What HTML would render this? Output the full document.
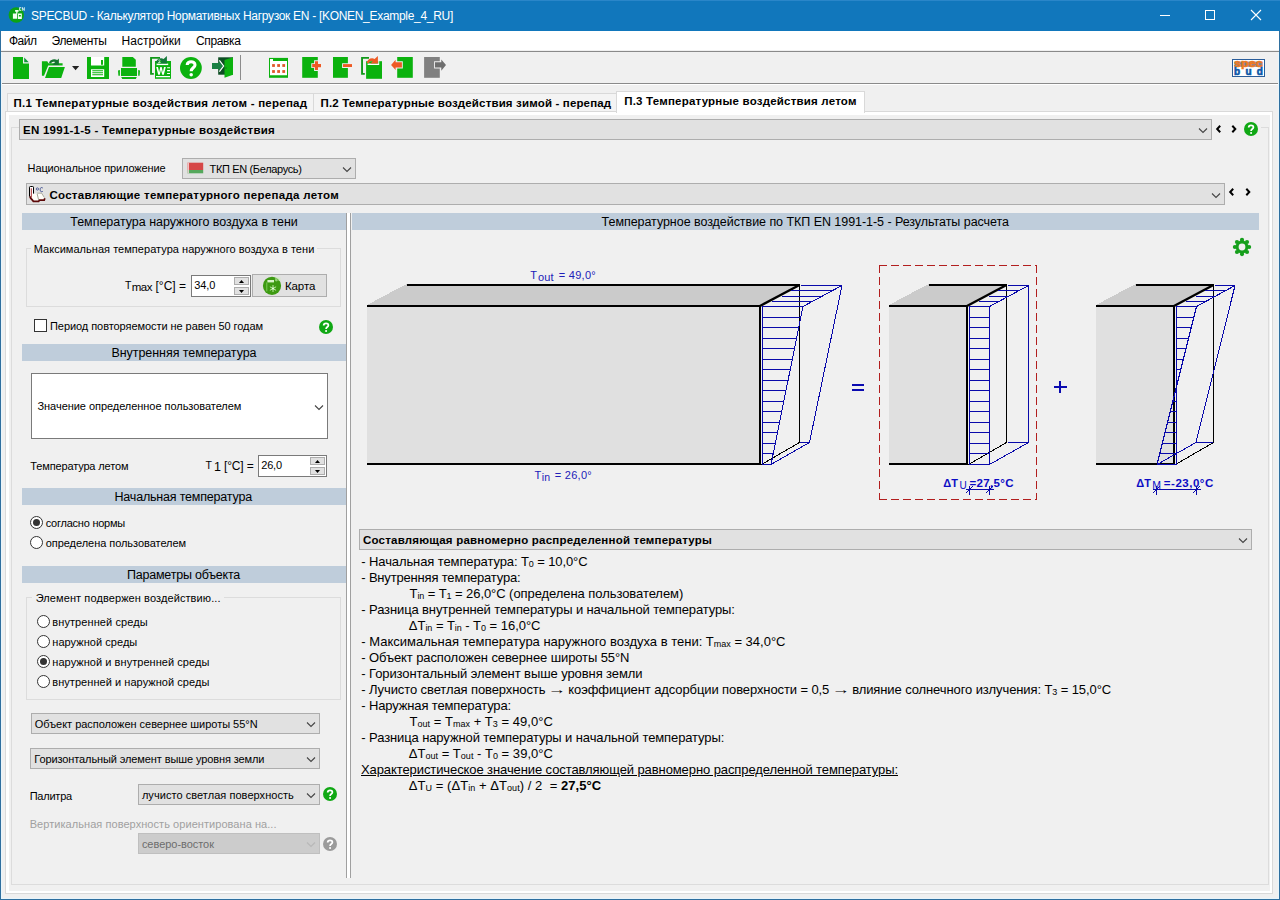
<!DOCTYPE html>
<html lang="ru"><head><meta charset="utf-8"><title>SPECBUD - Калькулятор Нормативных Нагрузок EN</title>
<style>
html,body{margin:0;padding:0;}
body{width:1280px;height:900px;overflow:hidden;background:#f0f0f0;font-family:"Liberation Sans",sans-serif;font-size:11px;color:#000;position:relative;}
.a{position:absolute;box-sizing:border-box;}
.t{position:absolute;white-space:nowrap;line-height:normal;}
.cb{position:absolute;box-sizing:border-box;background:#e1e1e1;border:1px solid #adadad;}
.wb{position:absolute;box-sizing:border-box;background:#fff;border:1px solid #7a7a7a;}
.band{position:absolute;background:#bfcddb;height:17px;}
.fs{position:absolute;box-sizing:border-box;border:1px solid #dcdcdc;}
.lg{position:absolute;background:#f0f0f0;height:3px;}
.sb{position:absolute;box-sizing:border-box;width:15px;height:8px;background:#e1e1e1;border:1px solid #adadad;}
.rd{position:absolute;box-sizing:border-box;width:13px;height:13px;border-radius:50%;background:#fff;border:1px solid #333;}
.rd.on:after{content:"";position:absolute;left:2px;top:2px;width:7px;height:7px;border-radius:50%;background:#333;}
svg{position:absolute;overflow:visible;}
sub.s{vertical-align:baseline;position:relative;}
</style></head><body>
<div class="a" style="left:0;top:0;width:1280px;height:31px;background:#1177bc"></div>
<div class="a" style="left:0;top:0;width:1280px;height:1px;background:#2a86c9"></div>
<svg style="left:8px;top:6px" width="18" height="18" viewBox="8 6 18 18">
<circle cx="16.3" cy="15" r="7.7" fill="#0ca414"/>
<path d="M12.9 13.4 H17.2 V18.8 H12.9 Z M15.1 10.1 H18.6 V11.8 H17.5 V13.4 H16.2 V11.8 H15.1 Z" fill="#f4fff4"/>
<path d="M18 13.6 H21.8 V19 H18 Z M18.9 15 V16.5 H20.8 V15 Z" fill="#f4fff4" fill-rule="evenodd"/>
<path d="M19.2 7.3 H21.2 V8 H20 V8.7 H21 V9.3 H20 V10 H21.2 V10.7 H19.2 Z M21.9 10.7 V7.3 H22.7 L23.9 9.4 V7.3 H24.7 V10.7 H23.9 L22.7 8.6 V10.7 Z" fill="#e6fbf0"/>
</svg>

<div class="t" style="left:31px;top:9px;font-size:12px;color:#fff;letter-spacing:-0.300px;">SPECBUD - Калькулятор Нормативных Нагрузок EN - [KONEN_Example_4_RU]</div>
<svg style="left:1160px;top:10px" width="102" height="11" viewBox="0 0 102 11"><path d="M0 5.5 H10" stroke="#fff" stroke-width="1"/><rect x="45.5" y="0.5" width="9" height="9" fill="none" stroke="#fff" stroke-width="1"/><path d="M91 0 L101 10 M101 0 L91 10" stroke="#fff" stroke-width="1.1"/></svg>
<div class="a" style="left:0;top:31px;width:1280px;height:19px;background:#fff"></div>
<div class="t" style="left:9px;top:34px;font-size:12px;letter-spacing:-0.504px;">Файл</div>
<div class="t" style="left:51.5px;top:34px;font-size:12px;letter-spacing:-0.322px;">Элементы</div>
<div class="t" style="left:121.5px;top:34px;font-size:12px;letter-spacing:0.040px;">Настройки</div>
<div class="t" style="left:196px;top:34px;font-size:12px;letter-spacing:-0.354px;">Справка</div>
<div class="a" style="left:0;top:51px;width:1280px;height:1px;background:#8a8a8a"></div>
<div class="a" style="left:0;top:83px;width:1280px;height:1px;background:#8a8a8a"></div>
<div class="a" style="left:0;top:84px;width:1280px;height:1px;background:#fff"></div>
<div class="a" style="left:240px;top:55px;width:1px;height:25px;background:#8c8c8c"></div>
<svg style="left:0;top:52px" width="460" height="31" viewBox="0 52 460 31">
<g fill="#0bb20e">
<!-- new -->
<path d="M13 57 H23 V63.5 H29 V79 H13 Z"/>
<path d="M24.2 57.4 L28.8 62.3 H24.2 Z" fill="#0f9a38"/>
<!-- open -->
<path d="M41.9 61.2 H47.3 L48.4 63.3 H62.6 V65.6 H48.2 L44 75.7 H41.9 Z"/>
<path d="M49 67.1 H64.9 L61.2 78 H45 Z"/>
<path d="M52 64.9 L58.9 58.6 V64.9 Z" fill="#14742f"/>
<path d="M49.9 63 C51.2 60.5 54.4 59.9 57 61.3" fill="none" stroke="#14742f" stroke-width="2.4"/>
<path d="M72 66 H79.2 L75.6 70.2 Z" fill="#222"/>
<!-- save -->
<path d="M87 57 H109 V79 H87 Z"/>
<path d="M91 57 H104.2 V65.4 H91 Z M91 69.2 H104.2 V77 H91 Z" fill="#fff"/>
<path d="M101 60 H103 V64.8 H101 Z M92.3 70.2 H103 V71.2 H92.3 Z M92.3 72.2 H103 V73.2 H92.3 Z M92.3 74.3 H103 V75.3 H92.3 Z"/>
<!-- print -->
<path d="M122.3 57 H132.8 L135.8 59.8 V66.8 H122.3 Z"/>
<path d="M121 68.1 H137 V76 H121 Z M118 70.6 L119.9 70 V75.8 H118.4 Z M140 70.6 L138.2 70 V75.8 H139.6 Z M121.2 77 H136.8 L135.8 79 H122.2 Z"/>
<!-- word -->
<path d="M150.1 57 H160 V58.7 H152 V73 H153.8 V74.7 H150.1 Z" fill="#12981a"/>
<path d="M155 61 H171 V78.8 H155 Z"/>
<path d="M156.2 67.1 H158 L159.1 72.2 L160.3 67.1 H161.7 L162.9 72.2 L164 67.1 H165.8 L163.8 74.7 H162.2 L161 69.8 L159.8 74.7 H158.2 Z M167.1 67.2 H170 V68.3 H167.1 Z M167.1 70 H170 V71.2 H167.1 Z M167.1 73 H170 V74 H167.1 Z M156 76.1 H170 V77.2 H156 Z" fill="#fff"/>
<path d="M156.6 63.6 H168.2 V65.1 H156.6 Z" fill="#fff"/><path d="M155.7 62.9 C156.4 59.3 160.2 57.3 163.6 58.9 L166.9 56.1 V63.4 H159.4 L161.8 61.3 C160.2 60.7 158.6 61.5 157.9 63.3 Z" fill="#14793a"/><path d="M158.3 60.3 Q159.6 59.3 160.1 60.4 Q160.1 61.3 158.4 62.5 H160.6" fill="none" stroke="#e9f7e9" stroke-width="0.7"/>
<!-- help -->
<circle cx="190.9" cy="68" r="10.9"/>
<path d="M187.2 65 C187.2 60.6 195 60.6 195 64.9 C195 67.8 191.2 67.8 191.2 71.2" fill="none" stroke="#fff" stroke-width="3.1"/>
<circle cx="191.2" cy="74.7" r="1.75" fill="#fff"/>
<!-- exit -->
<path d="M218.2 57.3 H233 V74.7 H218.2 Z" fill="#0c4d22"/>
<path d="M224.5 59.9 L233 57.3 V74.8 L224.5 77.8 Z"/>
<path d="M212 63 H219 V61 L223 66 L219 71 V68.9 H212 Z" fill="#1a8044"/>
<path d="M219.4 60.4 L223.6 66 L219.4 71.6" fill="none" stroke="#fff" stroke-width="1.2"/>
<circle cx="226" cy="68" r="0.7" fill="#0c6a26"/>
<!-- table -->
<path d="M269 57.9 H288 V77.8 H269 Z"/>
<path d="M270 59 H273 V60.9 H287 V75.3 H270 Z" fill="#fff"/>
<g fill="#e0582c"><rect x="272.1" y="64.1" width="2.8" height="2.8"/><rect x="277.2" y="64.1" width="2.8" height="2.8"/><rect x="282.3" y="64.1" width="2.8" height="2.8"/><rect x="272.1" y="70.1" width="2.8" height="2.8"/><rect x="277.2" y="70.1" width="2.8" height="2.8"/><rect x="282.3" y="70.1" width="2.8" height="2.8"/></g>
<!-- add -->
<path d="M302.2 57 H317.8 V77.8 H302.2 Z"/>
<path d="M315 61.2 H318 V64.1 H321 V67.2 H318 V70 H315 V67.2 H312.2 V64.1 H315 Z" fill="#ee5a24" stroke="#f0f0f0" stroke-width="1.8" paint-order="stroke"/>
<!-- remove -->
<path d="M333 57 H347.9 V77.8 H333 Z"/>
<path d="M343 64.1 H352 V67 H343 Z" fill="#ee5a24" stroke="#f0f0f0" stroke-width="1.8" paint-order="stroke"/>
<!-- copy -->
<path d="M361.1 57 H369 V58.7 H363 V73 H364.8 V74.7 H361.1 Z" fill="#12981a"/>
<path d="M366.1 61.2 H382 V78.8 H366.1 Z"/>
<path d="M367.6 63.6 H379.2 V65.1 H367.6 Z M379.2 61 V65.1 H378.3 V61 Z" fill="#fff"/><path d="M366.7 62.9 C367.4 59.3 371.2 57.3 374.6 58.9 L377.9 56.1 V63.4 H370.4 L372.8 61.3 C371.2 60.7 369.6 61.5 368.9 63.3 Z" fill="#ee5a24"/><!-- import -->
<path d="M397.2 57 H412.8 V77.8 H397.2 Z"/>
<path d="M391.1 64.9 L395.6 59.8 V62.2 H401.9 V67.6 H395.6 V70.1 Z" fill="#ee5a24" stroke="#f0f0f0" stroke-width="1.8" paint-order="stroke"/>
<!-- export (disabled) -->
<path d="M424.1 57 H439.8 V77.8 H424.1 Z" fill="#808080"/>
<path d="M435 62.2 H441.3 V59.4 L446 65 L441.3 70.7 V67.6 H435 Z" fill="#6e6e6e" stroke="#f0f0f0" stroke-width="1.8" paint-order="stroke"/>
</g>
</svg>

<svg style="left:1232px;top:59px" width="33" height="18" viewBox="0 0 33 18">
<rect x="0.5" y="0.5" width="32" height="17" fill="#fff" stroke="#2a5d9a" stroke-width="1"/>
<rect x="2.4" y="2.6" width="28.2" height="5.2" fill="#1f3158" opacity="0.6"/>
<text x="2.1" y="8.1" font-family="Liberation Sans, sans-serif" font-weight="700" font-size="11.5" fill="#ee7a22" stroke="#ee7a22" stroke-width="0.5" textLength="28.7" lengthAdjust="spacingAndGlyphs">spec</text>
<text x="2.1" y="15.7" font-family="Liberation Sans, sans-serif" font-weight="700" font-size="10" fill="#0b57a8" stroke="#0b57a8" stroke-width="0.6" textLength="28.7" lengthAdjust="spacing">bud</text>
</svg>

<div class="a" style="left:5px;top:111px;width:1268px;height:783px;border:1px solid #d9d9d9;background:#fff"></div>
<div class="a" style="left:9px;top:115px;width:1261px;height:776px;background:#f0f0f0"></div>
<div class="a" style="left:7px;top:93px;width:307px;height:18px;background:#f4f4f4;border:1px solid #d9d9d9;border-bottom:none"></div>
<div class="a" style="left:313px;top:93px;width:304px;height:18px;background:#f4f4f4;border:1px solid #d9d9d9;border-bottom:none"></div>
<div class="a" style="left:616px;top:91px;width:249px;height:22px;background:#fff;border:1px solid #d9d9d9;border-bottom:none"></div>
<div class="t" style="left:13.6px;top:97px;font-size:11.5px;font-weight:700;letter-spacing:0.242px;">П.1 Температурные воздействия летом - перепад</div>
<div class="t" style="left:320.5px;top:97px;font-size:11.5px;font-weight:700;letter-spacing:0.156px;">П.2 Температурные воздействия зимой - перепад</div>
<div class="t" style="left:624.2px;top:95px;font-size:11.5px;font-weight:700;letter-spacing:0.209px;">П.3 Температурные воздействия летом</div>
<div class="fs" style="left:11px;top:127px;width:1258px;height:758px"></div>
<div class="a" style="left:1212px;top:127px;width:49px;height:1px;background:#f0f0f0"></div>
<div class="cb" style="left:19px;top:119px;width:1193px;height:21px"></div>
<div class="t" style="left:23px;top:124px;font-size:11.5px;font-weight:700;letter-spacing:0.254px;">EN 1991-1-5 - Температурные воздействия</div>
<svg style="left:1198px;top:127px" width="10" height="7" viewBox="0 0 10 7"><path d="M1 1.5 L5 5.5 L9 1.5" fill="none" stroke="#444" stroke-width="1.1"/></svg>
<svg style="left:1215.75px;top:125px" width="5.5" height="8" viewBox="0 0 5.5 8"><path d="M4.2 0.8 L1.2 4 L4.2 7.2" fill="none" stroke="#000" stroke-width="2"/></svg>
<svg style="left:1230.65px;top:125px" width="5.5" height="8" viewBox="0 0 5.5 8"><path d="M1.3 0.8 L4.3 4 L1.3 7.2" fill="none" stroke="#000" stroke-width="2"/></svg>
<svg style="left:1244px;top:122px" width="14" height="14" viewBox="0 0 14 14"><circle cx="7" cy="7" r="7" fill="#10a814"/><path d="M4.7 5.4 C4.7 2.6 9.4 2.6 9.4 5.3 C9.4 7.1 7.1 7 7.1 8.9" fill="none" stroke="#fff" stroke-width="1.8"/><circle cx="7.1" cy="11" r="1.05" fill="#fff"/></svg>
<div class="t" style="left:27.6px;top:162px;font-size:11px;letter-spacing:-0.135px;">Национальное приложение</div>
<div class="cb" style="left:182px;top:158px;width:174px;height:21px"></div>
<svg style="left:187px;top:162px" width="17" height="12" viewBox="0 0 17 12">
<rect x="0.4" y="0.7" width="15.8" height="7.3" fill="#d64848"/>
<rect x="0.4" y="8" width="15.8" height="3.3" fill="#55a85c"/>
<rect x="0.4" y="0.7" width="1.6" height="10.6" fill="#f2d8d8" opacity="0.85"/>
</svg>

<div class="t" style="left:209.5px;top:163px;font-size:11px;letter-spacing:-0.340px;">ТКП EN (Беларусь)</div>
<svg style="left:342px;top:166px" width="10" height="7" viewBox="0 0 10 7"><path d="M1 1.5 L5 5.5 L9 1.5" fill="none" stroke="#444" stroke-width="1.1"/></svg>
<div class="cb" style="left:26px;top:183px;width:1199px;height:22px"></div>
<svg style="left:28px;top:185px" width="18" height="18" viewBox="28 185 18 18">
<path d="M33.2 194 L37 193.2 H41.6 L44.6 198 V200.2 H39.2 L38.4 201.6 H33.4 L30 197.2 V194.5 Z" fill="#fffdf8"/>
<path d="M29.5 196.6 V187.2 Q29.5 186.5 30.5 186.5 H32.5 Q33.5 186.5 33.5 187.2 V193.6" fill="#fff" stroke="#000" stroke-width="1"/>
<path d="M31.3 188.3 V197.6" stroke="#a51616" stroke-width="0.9"/>
<path d="M29.8 196.4 L30.8 198.4 L31.8 199.4 L33.4 201.4 H38.6 L39.4 200.2 H44.2 L44.8 198.2" fill="none" stroke="#5c0808" stroke-width="1.7"/>
<path d="M36.8 193.2 H41.6 L44.4 197.6" fill="none" stroke="#9a9a8c" stroke-width="0.8"/>
<path d="M37.2 194 L38.6 199.8" fill="none" stroke="#8a8a78" stroke-width="0.8"/>
<circle cx="37.4" cy="189" r="1.15" fill="none" stroke="#3b4a8c" stroke-width="0.8"/>
<path d="M42.8 188 Q40.2 186.6 40.2 189.6 Q40.2 192.6 42.8 191.4" fill="none" stroke="#3b4a8c" stroke-width="0.9"/>
</svg>

<div class="t" style="left:49.4px;top:189px;font-size:11.5px;font-weight:700;letter-spacing:0.297px;">Составляющие температурного перепада летом</div>
<svg style="left:1211px;top:192px" width="10" height="7" viewBox="0 0 10 7"><path d="M1 1.5 L5 5.5 L9 1.5" fill="none" stroke="#444" stroke-width="1.1"/></svg>
<svg style="left:1228.95px;top:188px" width="5.5" height="8" viewBox="0 0 5.5 8"><path d="M4.2 0.8 L1.2 4 L4.2 7.2" fill="none" stroke="#000" stroke-width="2"/></svg>
<svg style="left:1244.85px;top:188px" width="5.5" height="8" viewBox="0 0 5.5 8"><path d="M1.3 0.8 L4.3 4 L1.3 7.2" fill="none" stroke="#000" stroke-width="2"/></svg>
<div class="a" style="left:346px;top:213px;width:5px;height:665px;background:#fff;border-left:1px solid #a0a0a0;border-right:1px solid #a0a0a0"></div>
<div class="band" style="left:22px;top:213px;width:324px"></div>
<div class="t" style="left:70.3px;top:215px;font-size:12.5px;letter-spacing:-0.029px;">Температура наружного воздуха в тени</div>
<div class="fs" style="left:26px;top:248px;width:315px;height:59px"></div>
<div class="lg" style="left:31px;top:247px;width:286px"></div>
<div class="t" style="left:33.7px;top:243px;font-size:11px;letter-spacing:0.034px;">Максимальная температура наружного воздуха в тени</div>
<div class="t" style="left:125px;top:279px;font-size:10.5px;">T</div>
<div class="t" style="left:131.8px;top:281px;font-size:11.5px;letter-spacing:-0.511px;">max</div>
<div class="t" style="left:155.5px;top:279px;font-size:12px;">[°C] =</div>
<div class="wb" style="left:191px;top:275px;width:60px;height:22px"></div>
<div class="t" style="left:194.3px;top:279px;font-size:11px;letter-spacing:-0.130px;">34,0</div>
<div class="sb" style="left:234px;top:277px"></div><svg style="left:239px;top:279.5px" width="5" height="3" viewBox="0 0 5 3"><path d="M0 3 L2.5 0 L5 3 Z" fill="#000"/></svg><div class="sb" style="left:234px;top:287px"></div><svg style="left:239px;top:289.5px" width="5" height="3" viewBox="0 0 5 3"><path d="M0 0 L2.5 3 L5 0 Z" fill="#000"/></svg>
<div class="cb" style="left:252px;top:274px;width:75px;height:23px"></div>
<svg style="left:262px;top:276px" width="20" height="20" viewBox="262 276 20 20">
<circle cx="272" cy="285.8" r="9.1" fill="#3d9a12"/>
<path d="M267.4 280 H274 V282.4 H267.4 Z" fill="#d8f5c8"/>
<path d="M266.8 282.4 V291.4" stroke="#7cc85a" stroke-width="1"/>
<g stroke="#c9f0b4" stroke-width="0.9" fill="none"><path d="M273 285 V292 M269.9 286.8 L276.1 290.3 M269.9 290.3 L276.1 286.8"/></g>
<circle cx="273" cy="288.5" r="0.9" fill="#f2fff0"/>
<path d="M275.6 277.6 H277.2 M275.6 279.2 H277 M275.6 280.8 H277.2 M275.9 277.4 V281 M278 281 V277.5 L279.8 280.9 V277.4" stroke="#c9f0b4" stroke-width="0.7" fill="none"/>
</svg>

<div class="t" style="left:285px;top:280px;font-size:11.5px;letter-spacing:-0.116px;">Карта</div>
<div class="a" style="left:34px;top:319px;width:13px;height:13px;background:#fff;border:1px solid #333"></div>
<div class="t" style="left:50px;top:320px;font-size:11px;letter-spacing:-0.061px;">Период повторяемости не равен 50 годам</div>
<svg style="left:319px;top:320px" width="14" height="14" viewBox="0 0 14 14"><circle cx="7" cy="7" r="7" fill="#10a814"/><path d="M4.7 5.4 C4.7 2.6 9.4 2.6 9.4 5.3 C9.4 7.1 7.1 7 7.1 8.9" fill="none" stroke="#fff" stroke-width="1.8"/><circle cx="7.1" cy="11" r="1.05" fill="#fff"/></svg>
<div class="band" style="left:22px;top:344px;width:324px"></div>
<div class="t" style="left:111.5px;top:346px;font-size:12.5px;letter-spacing:-0.059px;">Внутренняя температура</div>
<div class="wb" style="left:31px;top:373px;width:297px;height:66px"></div>
<div class="t" style="left:37.5px;top:400px;font-size:11px;letter-spacing:-0.047px;">Значение определенное пользователем</div>
<svg style="left:314px;top:404px" width="10" height="7" viewBox="0 0 10 7"><path d="M1 1.5 L5 5.5 L9 1.5" fill="none" stroke="#444" stroke-width="1.1"/></svg>
<div class="t" style="left:30.3px;top:460px;font-size:11px;letter-spacing:-0.144px;">Температура летом</div>
<div class="t" style="left:205.5px;top:459px;font-size:10.5px;">T</div>
<div class="t" style="left:214px;top:460px;font-size:12.5px;">1</div>
<div class="t" style="left:224px;top:459px;font-size:12px;letter-spacing:-0.164px;">[°C] =</div>
<div class="wb" style="left:258px;top:455px;width:69px;height:22px"></div>
<div class="t" style="left:261.2px;top:459px;font-size:11px;letter-spacing:-0.155px;">26,0</div>
<div class="sb" style="left:310px;top:457px"></div><svg style="left:315px;top:459.5px" width="5" height="3" viewBox="0 0 5 3"><path d="M0 3 L2.5 0 L5 3 Z" fill="#000"/></svg><div class="sb" style="left:310px;top:467px"></div><svg style="left:315px;top:469.5px" width="5" height="3" viewBox="0 0 5 3"><path d="M0 0 L2.5 3 L5 0 Z" fill="#000"/></svg>
<div class="band" style="left:22px;top:488px;width:324px"></div>
<div class="t" style="left:114.5px;top:490px;font-size:12.5px;letter-spacing:-0.188px;">Начальная температура</div>
<div class="rd on" style="left:30px;top:516px"></div>
<div class="t" style="left:45.7px;top:517px;font-size:11px;letter-spacing:-0.234px;">согласно нормы</div>
<div class="rd" style="left:30px;top:536px"></div>
<div class="t" style="left:45.7px;top:537px;font-size:11px;letter-spacing:-0.042px;">определена пользователем</div>
<div class="band" style="left:22px;top:566px;width:324px"></div>
<div class="t" style="left:127px;top:568px;font-size:12.5px;letter-spacing:-0.219px;">Параметры объекта</div>
<div class="fs" style="left:26px;top:597px;width:315px;height:103px"></div>
<div class="lg" style="left:32px;top:596px;width:192px"></div>
<div class="t" style="left:35.7px;top:592px;font-size:11px;letter-spacing:0.094px;">Элемент подвержен воздействию...</div>
<div class="rd" style="left:37px;top:615px"></div>
<div class="t" style="left:52.3px;top:616px;font-size:11px;letter-spacing:0.088px;">внутренней среды</div>
<div class="rd" style="left:37px;top:635px"></div>
<div class="t" style="left:52.3px;top:636px;font-size:11px;letter-spacing:0.044px;">наружной среды</div>
<div class="rd on" style="left:37px;top:655px"></div>
<div class="t" style="left:52.3px;top:656px;font-size:11px;letter-spacing:0.050px;">наружной и внутренней среды</div>
<div class="rd" style="left:37px;top:675px"></div>
<div class="t" style="left:52.3px;top:676px;font-size:11px;letter-spacing:0.050px;">внутренней и наружной среды</div>
<div class="cb" style="left:31px;top:713px;width:289px;height:21px"></div>
<div class="t" style="left:34.8px;top:718px;font-size:11px;letter-spacing:-0.024px;">Объект расположен севернее широты 55°N</div>
<svg style="left:306px;top:721px" width="10" height="7" viewBox="0 0 10 7"><path d="M1 1.5 L5 5.5 L9 1.5" fill="none" stroke="#444" stroke-width="1.1"/></svg>
<div class="cb" style="left:30px;top:748px;width:290px;height:21px"></div>
<div class="t" style="left:34.3px;top:753px;font-size:11px;letter-spacing:-0.107px;">Горизонтальный элемент выше уровня земли</div>
<svg style="left:306px;top:756px" width="10" height="7" viewBox="0 0 10 7"><path d="M1 1.5 L5 5.5 L9 1.5" fill="none" stroke="#444" stroke-width="1.1"/></svg>
<div class="t" style="left:29.7px;top:789.5px;font-size:11px;letter-spacing:-0.225px;">Палитра</div>
<div class="cb" style="left:138px;top:784px;width:182px;height:21px"></div>
<div class="t" style="left:141.9px;top:789px;font-size:11px;letter-spacing:0.053px;">лучисто светлая поверхность</div>
<svg style="left:306px;top:792px" width="10" height="7" viewBox="0 0 10 7"><path d="M1 1.5 L5 5.5 L9 1.5" fill="none" stroke="#444" stroke-width="1.1"/></svg>
<svg style="left:323px;top:787px" width="14" height="14" viewBox="0 0 14 14"><circle cx="7" cy="7" r="7" fill="#10a814"/><path d="M4.7 5.4 C4.7 2.6 9.4 2.6 9.4 5.3 C9.4 7.1 7.1 7 7.1 8.9" fill="none" stroke="#fff" stroke-width="1.8"/><circle cx="7.1" cy="11" r="1.05" fill="#fff"/></svg>
<div class="t" style="left:29.7px;top:818px;font-size:11px;color:#a0a0a0;letter-spacing:0.057px;">Вертикальная поверхность ориентирована на...</div>
<div class="cb" style="left:138px;top:833px;width:182px;height:21px;background:#cccccc;border-color:#bfbfbf"></div>
<div class="t" style="left:141.9px;top:838px;font-size:11px;color:#6d6d6d;letter-spacing:-0.034px;">северо-восток</div>
<svg style="left:306px;top:841px" width="10" height="7" viewBox="0 0 10 7"><path d="M1 1.5 L5 5.5 L9 1.5" fill="none" stroke="#b8b8b8" stroke-width="1.1"/></svg>
<svg style="left:323px;top:837.3px" width="14" height="14" viewBox="0 0 14 14"><circle cx="7" cy="7" r="7" fill="#9b9b9b"/><path d="M4.7 5.4 C4.7 2.6 9.4 2.6 9.4 5.3 C9.4 7.1 7.1 7 7.1 8.9" fill="none" stroke="#fff" stroke-width="1.8"/><circle cx="7.1" cy="11" r="1.05" fill="#fff"/></svg>
<div class="band" style="left:352px;top:213px;width:907px"></div>
<div class="t" style="left:601.6px;top:215px;font-size:12.5px;letter-spacing:-0.048px;">Температурное воздействие по ТКП EN 1991-1-5 - Результаты расчета</div>
<svg style="left:1232px;top:237px" width="20" height="20" viewBox="-10 -10 20 20">
<g fill="#169f1c">
<circle r="6.5"/>
<circle cx="0" cy="-7.1" r="2.1"/><circle cx="0" cy="7.1" r="2.1"/><circle cx="-7.1" cy="0" r="2.1"/><circle cx="7.1" cy="0" r="2.1"/>
<circle cx="5.02" cy="-5.02" r="2.1"/><circle cx="-5.02" cy="5.02" r="2.1"/><circle cx="-5.02" cy="-5.02" r="2.1"/><circle cx="5.02" cy="5.02" r="2.1"/>
</g>
<circle r="3.4" fill="#f0f0f0"/>
</svg>

<svg style="left:0;top:0" width="1280" height="900" viewBox="0 0 1280 900" shape-rendering="crispEdges">
<defs><linearGradient id="fg" x1="0" x2="1" y1="0" y2="0"><stop offset="0" stop-color="#e0e0e0"/><stop offset="0.12" stop-color="#e0e0e0"/><stop offset="1" stop-color="#e0e0e0"/></linearGradient></defs>
<polygon points="367,305 406.5,284 800.5,284 761,305" fill="#cbcbcb"/>
<rect x="367" y="305" width="394" height="160" fill="url(#fg)"/>
<rect x="367" y="305" width="394" height="2" fill="#000"/>
<rect x="406.5" y="284" width="393.5" height="2" fill="#000"/>
<rect x="367" y="463" width="394" height="2" fill="#000"/>
<rect x="759" y="305" width="2" height="160" fill="#000"/>
<line x1="760" y1="306" x2="799.5" y2="285" stroke="#000" stroke-width="2.4" shape-rendering="auto"/>
<line x1="799.50" y1="285.00" x2="799.50" y2="442.50" stroke="#000" stroke-width="1"/>
<line x1="761.50" y1="464.50" x2="799.50" y2="442.50" stroke="#000" stroke-width="1"/>
<line x1="762.50" y1="306.50" x2="803.00" y2="306.50" stroke="#0909aa" stroke-width="1"/>
<line x1="762.50" y1="317.03" x2="800.87" y2="317.03" stroke="#0909aa" stroke-width="1"/>
<line x1="762.50" y1="327.57" x2="798.73" y2="327.57" stroke="#0909aa" stroke-width="1"/>
<line x1="762.50" y1="338.10" x2="796.60" y2="338.10" stroke="#0909aa" stroke-width="1"/>
<line x1="762.50" y1="348.63" x2="794.47" y2="348.63" stroke="#0909aa" stroke-width="1"/>
<line x1="762.50" y1="359.17" x2="792.33" y2="359.17" stroke="#0909aa" stroke-width="1"/>
<line x1="762.50" y1="369.70" x2="790.20" y2="369.70" stroke="#0909aa" stroke-width="1"/>
<line x1="762.50" y1="380.23" x2="788.07" y2="380.23" stroke="#0909aa" stroke-width="1"/>
<line x1="762.50" y1="390.77" x2="785.93" y2="390.77" stroke="#0909aa" stroke-width="1"/>
<line x1="762.50" y1="401.30" x2="783.80" y2="401.30" stroke="#0909aa" stroke-width="1"/>
<line x1="762.50" y1="411.83" x2="781.67" y2="411.83" stroke="#0909aa" stroke-width="1"/>
<line x1="762.50" y1="422.37" x2="779.53" y2="422.37" stroke="#0909aa" stroke-width="1"/>
<line x1="762.50" y1="432.90" x2="777.40" y2="432.90" stroke="#0909aa" stroke-width="1"/>
<line x1="762.50" y1="443.43" x2="775.27" y2="443.43" stroke="#0909aa" stroke-width="1"/>
<line x1="762.50" y1="453.97" x2="773.13" y2="453.97" stroke="#0909aa" stroke-width="1"/>
<line x1="762.50" y1="464.50" x2="771.00" y2="464.50" stroke="#0909aa" stroke-width="1"/>
<line x1="762.50" y1="306.00" x2="762.50" y2="465.00" stroke="#0909aa" stroke-width="1"/>
<line x1="803.00" y1="306.50" x2="771.00" y2="464.50" stroke="#0909aa" stroke-width="1"/>
<line x1="762.50" y1="306.50" x2="803.00" y2="306.50" stroke="#0909aa" stroke-width="1"/>
<line x1="772.00" y1="301.25" x2="812.75" y2="301.25" stroke="#0909aa" stroke-width="1"/>
<line x1="781.50" y1="296.00" x2="822.50" y2="296.00" stroke="#0909aa" stroke-width="1"/>
<line x1="791.00" y1="290.75" x2="832.25" y2="290.75" stroke="#0909aa" stroke-width="1"/>
<line x1="800.50" y1="285.50" x2="842.00" y2="285.50" stroke="#0909aa" stroke-width="1"/>
<line x1="803.00" y1="306.50" x2="842.00" y2="285.50" stroke="#0909aa" stroke-width="1"/>
<line x1="771.00" y1="464.50" x2="809.50" y2="442.50" stroke="#0909aa" stroke-width="1"/>
<line x1="842.00" y1="285.50" x2="809.50" y2="442.50" stroke="#0909aa" stroke-width="1"/>
<line x1="800.00" y1="442.50" x2="809.50" y2="442.50" stroke="#0909aa" stroke-width="1"/>
<polygon points="889,305 928.5,284 1007.5,284 968,305" fill="#cbcbcb"/>
<rect x="889" y="305" width="79" height="160" fill="url(#fg)"/>
<rect x="889" y="305" width="79" height="2" fill="#000"/>
<rect x="928.5" y="284" width="78.5" height="2" fill="#000"/>
<rect x="889" y="463" width="79" height="2" fill="#000"/>
<rect x="966" y="305" width="2" height="160" fill="#000"/>
<line x1="967" y1="306" x2="1006.5" y2="285" stroke="#000" stroke-width="2.4" shape-rendering="auto"/>
<line x1="1006.50" y1="285.00" x2="1006.50" y2="442.50" stroke="#000" stroke-width="1"/>
<line x1="968.50" y1="464.50" x2="1006.50" y2="442.50" stroke="#000" stroke-width="1"/>
<line x1="969.50" y1="306.50" x2="989.50" y2="306.50" stroke="#0909aa" stroke-width="1"/>
<line x1="969.50" y1="317.03" x2="989.50" y2="317.03" stroke="#0909aa" stroke-width="1"/>
<line x1="969.50" y1="327.57" x2="989.50" y2="327.57" stroke="#0909aa" stroke-width="1"/>
<line x1="969.50" y1="338.10" x2="989.50" y2="338.10" stroke="#0909aa" stroke-width="1"/>
<line x1="969.50" y1="348.63" x2="989.50" y2="348.63" stroke="#0909aa" stroke-width="1"/>
<line x1="969.50" y1="359.17" x2="989.50" y2="359.17" stroke="#0909aa" stroke-width="1"/>
<line x1="969.50" y1="369.70" x2="989.50" y2="369.70" stroke="#0909aa" stroke-width="1"/>
<line x1="969.50" y1="380.23" x2="989.50" y2="380.23" stroke="#0909aa" stroke-width="1"/>
<line x1="969.50" y1="390.77" x2="989.50" y2="390.77" stroke="#0909aa" stroke-width="1"/>
<line x1="969.50" y1="401.30" x2="989.50" y2="401.30" stroke="#0909aa" stroke-width="1"/>
<line x1="969.50" y1="411.83" x2="989.50" y2="411.83" stroke="#0909aa" stroke-width="1"/>
<line x1="969.50" y1="422.37" x2="989.50" y2="422.37" stroke="#0909aa" stroke-width="1"/>
<line x1="969.50" y1="432.90" x2="989.50" y2="432.90" stroke="#0909aa" stroke-width="1"/>
<line x1="969.50" y1="443.43" x2="989.50" y2="443.43" stroke="#0909aa" stroke-width="1"/>
<line x1="969.50" y1="453.97" x2="989.50" y2="453.97" stroke="#0909aa" stroke-width="1"/>
<line x1="969.50" y1="464.50" x2="989.50" y2="464.50" stroke="#0909aa" stroke-width="1"/>
<line x1="969.50" y1="306.00" x2="969.50" y2="465.00" stroke="#0909aa" stroke-width="1"/>
<line x1="989.50" y1="306.00" x2="989.50" y2="465.00" stroke="#0909aa" stroke-width="1"/>
<line x1="969.50" y1="306.50" x2="989.50" y2="306.50" stroke="#0909aa" stroke-width="1"/>
<line x1="979.12" y1="301.25" x2="999.25" y2="301.25" stroke="#0909aa" stroke-width="1"/>
<line x1="988.75" y1="296.00" x2="1009.00" y2="296.00" stroke="#0909aa" stroke-width="1"/>
<line x1="998.38" y1="290.75" x2="1018.75" y2="290.75" stroke="#0909aa" stroke-width="1"/>
<line x1="1008.00" y1="285.50" x2="1028.50" y2="285.50" stroke="#0909aa" stroke-width="1"/>
<line x1="989.50" y1="306.50" x2="1028.50" y2="285.50" stroke="#0909aa" stroke-width="1"/>
<line x1="989.50" y1="464.50" x2="1028.50" y2="442.50" stroke="#0909aa" stroke-width="1"/>
<line x1="1028.50" y1="285.00" x2="1028.50" y2="443.00" stroke="#0909aa" stroke-width="1"/>
<line x1="1008.00" y1="442.50" x2="1028.50" y2="442.50" stroke="#0909aa" stroke-width="1"/>
<polygon points="1096,305 1135.5,284 1214.5,284 1175,305" fill="#cbcbcb"/>
<rect x="1096" y="305" width="79" height="160" fill="url(#fg)"/>
<rect x="1096" y="305" width="79" height="2" fill="#000"/>
<rect x="1135.5" y="284" width="78.5" height="2" fill="#000"/>
<rect x="1096" y="463" width="79" height="2" fill="#000"/>
<rect x="1173" y="305" width="2" height="160" fill="#000"/>
<line x1="1174" y1="306" x2="1213.5" y2="285" stroke="#000" stroke-width="2.4" shape-rendering="auto"/>
<line x1="1213.50" y1="285.00" x2="1213.50" y2="442.50" stroke="#000" stroke-width="1"/>
<line x1="1175.50" y1="464.50" x2="1213.50" y2="442.50" stroke="#000" stroke-width="1"/>
<line x1="1176.50" y1="306.50" x2="1196.50" y2="306.50" stroke="#0909aa" stroke-width="1"/>
<line x1="1176.50" y1="317.03" x2="1193.87" y2="317.03" stroke="#0909aa" stroke-width="1"/>
<line x1="1176.50" y1="327.57" x2="1191.23" y2="327.57" stroke="#0909aa" stroke-width="1"/>
<line x1="1176.50" y1="338.10" x2="1188.60" y2="338.10" stroke="#0909aa" stroke-width="1"/>
<line x1="1176.50" y1="348.63" x2="1185.97" y2="348.63" stroke="#0909aa" stroke-width="1"/>
<line x1="1176.50" y1="359.17" x2="1183.33" y2="359.17" stroke="#0909aa" stroke-width="1"/>
<line x1="1176.50" y1="369.70" x2="1180.70" y2="369.70" stroke="#0909aa" stroke-width="1"/>
<line x1="1176.50" y1="380.23" x2="1178.07" y2="380.23" stroke="#0909aa" stroke-width="1"/>
<line x1="1176.50" y1="390.77" x2="1175.43" y2="390.77" stroke="#0909aa" stroke-width="1"/>
<line x1="1176.50" y1="401.30" x2="1172.80" y2="401.30" stroke="#0909aa" stroke-width="1"/>
<line x1="1176.50" y1="411.83" x2="1170.17" y2="411.83" stroke="#0909aa" stroke-width="1"/>
<line x1="1176.50" y1="422.37" x2="1167.53" y2="422.37" stroke="#0909aa" stroke-width="1"/>
<line x1="1176.50" y1="432.90" x2="1164.90" y2="432.90" stroke="#0909aa" stroke-width="1"/>
<line x1="1176.50" y1="443.43" x2="1162.27" y2="443.43" stroke="#0909aa" stroke-width="1"/>
<line x1="1176.50" y1="453.97" x2="1159.63" y2="453.97" stroke="#0909aa" stroke-width="1"/>
<line x1="1176.50" y1="464.50" x2="1157.00" y2="464.50" stroke="#0909aa" stroke-width="1"/>
<line x1="1176.50" y1="306.00" x2="1176.50" y2="465.00" stroke="#0909aa" stroke-width="1"/>
<line x1="1196.50" y1="306.50" x2="1157.00" y2="464.50" stroke="#0909aa" stroke-width="1"/>
<line x1="1176.50" y1="306.50" x2="1196.50" y2="306.50" stroke="#0909aa" stroke-width="1"/>
<line x1="1186.12" y1="301.25" x2="1206.12" y2="301.25" stroke="#0909aa" stroke-width="1"/>
<line x1="1195.75" y1="296.00" x2="1215.75" y2="296.00" stroke="#0909aa" stroke-width="1"/>
<line x1="1205.38" y1="290.75" x2="1225.38" y2="290.75" stroke="#0909aa" stroke-width="1"/>
<line x1="1215.00" y1="285.50" x2="1235.00" y2="285.50" stroke="#0909aa" stroke-width="1"/>
<line x1="1196.50" y1="306.50" x2="1235.00" y2="285.50" stroke="#0909aa" stroke-width="1"/>
<line x1="1157.00" y1="464.50" x2="1196.00" y2="442.50" stroke="#0909aa" stroke-width="1"/>
<line x1="1235.00" y1="285.50" x2="1196.00" y2="442.50" stroke="#0909aa" stroke-width="1"/>
<line x1="1196.00" y1="442.50" x2="1213.00" y2="442.50" stroke="#0909aa" stroke-width="1"/>
<rect x="852" y="384" width="12" height="2" fill="#0a0ab0"/><rect x="852" y="389" width="12" height="2" fill="#0a0ab0"/>
<rect x="1054" y="386" width="13" height="2" fill="#0a0ab0"/><rect x="1059" y="381" width="2" height="12" fill="#0a0ab0"/>
<line x1="879" y1="265.5" x2="1037" y2="265.5" stroke="#b21e1e" stroke-width="1" stroke-dasharray="8 4"/>
<line x1="879" y1="499.5" x2="1037" y2="499.5" stroke="#b21e1e" stroke-width="1" stroke-dasharray="8 4"/>
<line x1="879.5" y1="265" x2="879.5" y2="500" stroke="#b21e1e" stroke-width="1" stroke-dasharray="8 4"/>
<line x1="1036.5" y1="265" x2="1036.5" y2="500" stroke="#b21e1e" stroke-width="1" stroke-dasharray="8 4"/>
<line x1="966.00" y1="489.50" x2="994.00" y2="489.50" stroke="#0909aa" stroke-width="1"/>
<line x1="969.50" y1="486.00" x2="969.50" y2="495.00" stroke="#0909aa" stroke-width="1"/>
<line x1="966.0" y1="493" x2="973.0" y2="486" stroke="#0909aa" stroke-width="1" shape-rendering="auto"/>
<line x1="989.50" y1="486.00" x2="989.50" y2="495.00" stroke="#0909aa" stroke-width="1"/>
<line x1="986.0" y1="493" x2="993.0" y2="486" stroke="#0909aa" stroke-width="1" shape-rendering="auto"/>
<line x1="1153.00" y1="489.50" x2="1201.00" y2="489.50" stroke="#0909aa" stroke-width="1"/>
<line x1="1156.50" y1="486.00" x2="1156.50" y2="495.00" stroke="#0909aa" stroke-width="1"/>
<line x1="1153.0" y1="493" x2="1160.0" y2="486" stroke="#0909aa" stroke-width="1" shape-rendering="auto"/>
<line x1="1196.50" y1="486.00" x2="1196.50" y2="495.00" stroke="#0909aa" stroke-width="1"/>
<line x1="1193.0" y1="493" x2="1200.0" y2="486" stroke="#0909aa" stroke-width="1" shape-rendering="auto"/>
</svg>
<div class="t" style="left:530.2px;top:269px;font-size:11px;color:#2020b8;">T</div>
<div class="t" style="left:537.9px;top:271px;font-size:11px;color:#2020b8;letter-spacing:0.201px;">out</div>
<div class="t" style="left:558.7px;top:269px;font-size:11px;color:#2020b8;letter-spacing:0.286px;">= 49,0°</div>
<div class="t" style="left:534.4px;top:469px;font-size:11px;color:#2020b8;">T</div>
<div class="t" style="left:541.8px;top:471px;font-size:10.5px;color:#2020b8;">in</div>
<div class="t" style="left:554.8px;top:469px;font-size:11px;color:#2020b8;letter-spacing:0.272px;">= 26,0°</div>
<div class="t" style="left:943.3px;top:477px;font-size:11px;font-weight:700;color:#0c0cc4;">ΔT</div>
<div class="t" style="left:959.6px;top:480px;font-size:10px;color:#0c0cc4;">U</div>
<div class="t" style="left:969.5px;top:477px;font-size:11.5px;font-weight:700;color:#0c0cc4;letter-spacing:0.326px;">=27,5°C</div>
<div class="t" style="left:1136.3px;top:477px;font-size:11px;font-weight:700;color:#0c0cc4;">ΔT</div>
<div class="t" style="left:1152.2px;top:479px;font-size:10.5px;color:#0c0cc4;">M</div>
<div class="t" style="left:1163.8px;top:477px;font-size:11.5px;font-weight:700;color:#0c0cc4;letter-spacing:0.520px;">=-23,0°C</div>
<div class="cb" style="left:359px;top:529px;width:893px;height:21px"></div>
<div class="t" style="left:363px;top:534px;font-size:11.5px;font-weight:700;letter-spacing:0.207px;">Составляющая равномерно распределенной температуры</div>
<svg style="left:1238px;top:537px" width="10" height="7" viewBox="0 0 10 7"><path d="M1 1.5 L5 5.5 L9 1.5" fill="none" stroke="#444" stroke-width="1.1"/></svg>
<div class="t" style="left:361.3px;top:554px;font-size:13px;letter-spacing:-0.104px;">- Начальная температура: T<span style="font-size:9px;position:relative;top:1px">0</span> = 10,0°C</div>
<div class="t" style="left:361.3px;top:570px;font-size:13px;letter-spacing:-0.180px;">- Внутренняя температура:</div>
<div class="t" style="left:409.5px;top:586px;font-size:13px;letter-spacing:-0.066px;">T<span style="font-size:9px;position:relative;top:1px">in</span> = T<span style="font-size:9px;position:relative;top:1px">1</span> = 26,0°C (определена пользователем)</div>
<div class="t" style="left:361.3px;top:602px;font-size:13px;letter-spacing:-0.117px;">- Разница внутренней температуры и начальной температуры:</div>
<div class="t" style="left:408.8px;top:618px;font-size:13px;letter-spacing:-0.020px;">ΔT<span style="font-size:9px;position:relative;top:1px">in</span> = T<span style="font-size:9px;position:relative;top:1px">in</span> - T<span style="font-size:9px;position:relative;top:1px">0</span> = 16,0°C</div>
<div class="t" style="left:361.3px;top:634px;font-size:13px;letter-spacing:-0.005px;">- Максимальная температура наружного воздуха в тени: T<span style="font-size:9px;position:relative;top:1px">max</span> = 34,0°C</div>
<div class="t" style="left:361.3px;top:650px;font-size:13px;letter-spacing:-0.108px;">- Объект расположен севернее широты 55°N</div>
<div class="t" style="left:361.3px;top:666px;font-size:13px;letter-spacing:-0.086px;">- Горизонтальный элемент выше уровня земли</div>
<div class="t" style="left:361.3px;top:682px;font-size:13px;letter-spacing:-0.100px;">- Лучисто светлая поверхность <span style="display:inline-block;transform:scaleX(1.4);margin:0 1.5px">→</span> коэффициент адсорбции поверхности = 0,5 <span style="display:inline-block;transform:scaleX(1.4);margin:0 1.5px">→</span> влияние солнечного излучения: T<span style="font-size:9px;position:relative;top:1px">3</span> = 15,0°C</div>
<div class="t" style="left:361.3px;top:698px;font-size:13px;letter-spacing:-0.143px;">- Наружная температура:</div>
<div class="t" style="left:409.5px;top:714px;font-size:13px;letter-spacing:0.049px;">T<span style="font-size:9px;position:relative;top:1px">out</span> = T<span style="font-size:9px;position:relative;top:1px">max</span> + T<span style="font-size:9px;position:relative;top:1px">3</span> = 49,0°C</div>
<div class="t" style="left:361.3px;top:730px;font-size:13px;letter-spacing:-0.108px;">- Разница наружной температуры и начальной температуры:</div>
<div class="t" style="left:408.8px;top:746px;font-size:13px;letter-spacing:0.039px;">ΔT<span style="font-size:9px;position:relative;top:1px">out</span> = T<span style="font-size:9px;position:relative;top:1px">out</span> - T<span style="font-size:9px;position:relative;top:1px">0</span> = 39,0°C</div>
<div class="t" style="left:361px;top:762px;font-size:13px;letter-spacing:-0.093px;"><span style="text-decoration:underline">Характеристическое значение составляющей равномерно распределенной температуры:</span></div>
<div class="t" style="left:408.8px;top:778px;font-size:13px;letter-spacing:0.053px;">ΔT<span style="font-size:9px;position:relative;top:1px">U</span> = (ΔT<span style="font-size:9px;position:relative;top:1px">in</span> + ΔT<span style="font-size:9px;position:relative;top:1px">out</span>) / 2 &nbsp;= <b>27,5°C</b></div>
<div class="a" style="left:0;top:31px;width:1px;height:869px;background:#2f6f9f"></div>
<div class="a" style="left:1px;top:52px;width:1px;height:847px;background:#e9f5fb"></div>
<div class="a" style="left:1279px;top:31px;width:1px;height:869px;background:#2f6f9f"></div>
<div class="a" style="left:1278px;top:52px;width:1px;height:847px;background:#e9f5fb"></div>
<div class="a" style="left:0;top:899px;width:1280px;height:1px;background:#2f6f9f"></div>
<div class="a" style="left:1px;top:898px;width:1278px;height:1px;background:#e9f5fb"></div>
</body></html>
